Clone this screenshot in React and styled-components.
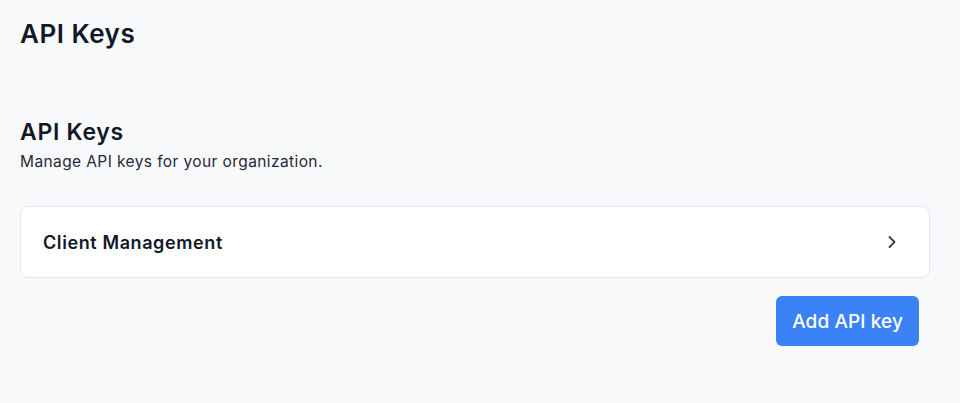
import React from "react";
import styled, { createGlobalStyle } from "styled-components";
import { ChevronRight } from "lucide-react";

const GlobalStyle = createGlobalStyle`
  html, body {
    margin: 0;
    padding: 0;
    background: #f8f9fb;
    font-family: Inter, "Liberation Sans", sans-serif;
    color: #111827;
  }
`;

const Page = styled.div`
  padding: 17px 30px 40px 20px;
  display: flex;
  flex-direction: column;
`;

const PageTitle = styled.h1`
  margin: 0;
  font-size: 26px;
  line-height: 34px;
  font-weight: 600;
  letter-spacing: 0.5px;
  color: #111827;
`;

const Section = styled.section`
  margin-top: 66px;
  display: flex;
  flex-direction: column;
`;

const SectionTitle = styled.h2`
  margin: 0;
  font-size: 23px;
  line-height: 30px;
  font-weight: 600;
  letter-spacing: 0.7px;
`;

const SectionText = styled.p`
  margin: 5px 0 0;
  font-size: 15.5px;
  line-height: 20px;
  letter-spacing: 0.4px;
  color: #1f2937;
`;

const Card = styled.div`
  margin-top: 34px;
  height: 72px;
  box-sizing: border-box;
  background: #fff;
  border: 1px solid #e2e6ee;
  border-radius: 8px;
  padding: 0 27px 0 22px;
  display: flex;
  align-items: center;
  justify-content: space-between;
  cursor: pointer;
`;

const CardLabel = styled.span`
  font-size: 18px;
  font-weight: 600;
  letter-spacing: 0.6px;
  color: #111827;
`;

const Actions = styled.div`
  display: flex;
  justify-content: flex-end;
  margin-top: 18px;
  padding-right: 11px;
`;

const Button = styled.button`
  height: 50px;
  padding: 0 16px;
  border: none;
  border-radius: 6px;
  background: #3b82f6;
  color: #fff;
  font-family: inherit;
  font-size: 19px;
  font-weight: 500;
  letter-spacing: 0.1px;
  cursor: pointer;
`;

export default function App() {
  return (
    <>
      <GlobalStyle />
      <Page>
        <PageTitle>API Keys</PageTitle>
        <Section>
          <SectionTitle>API Keys</SectionTitle>
          <SectionText>Manage API keys for your organization.</SectionText>
          <Card>
            <CardLabel>Client Management</CardLabel>
            <ChevronRight size={20} color="#374151" strokeWidth={2.2} />
          </Card>
          <Actions>
            <Button>Add API key</Button>
          </Actions>
        </Section>
      </Page>
    </>
  );
}
